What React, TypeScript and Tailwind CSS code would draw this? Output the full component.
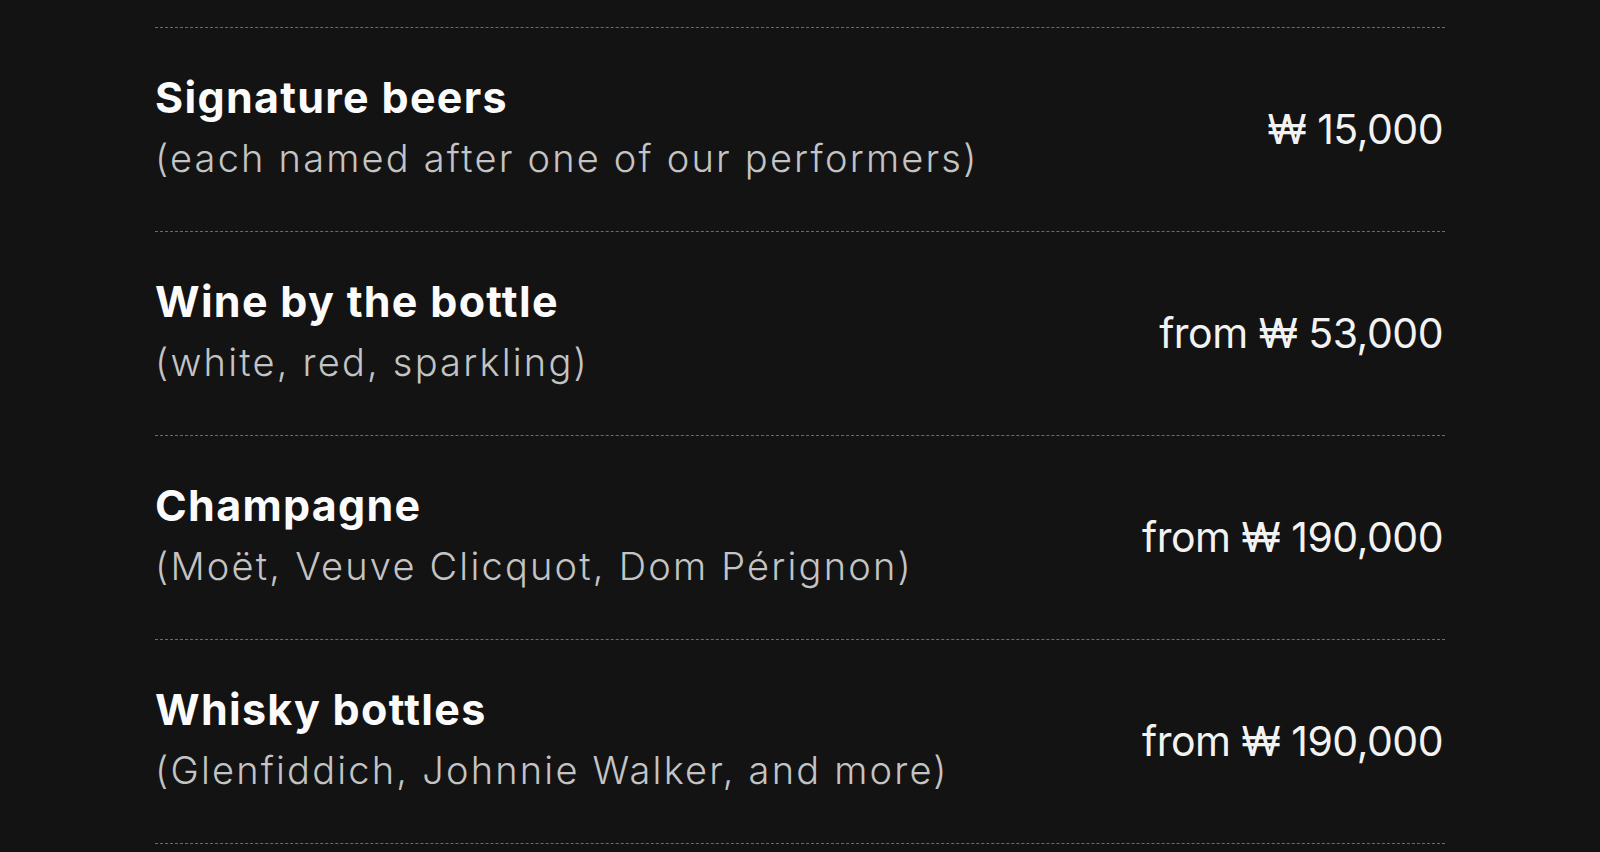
const items = [
  { name: 'Signature beers', note: '(each named after one of our performers)', price: '₩ 15,000' },
  { name: 'Wine by the bottle', note: '(white, red, sparkling)', price: 'from ₩ 53,000' },
  { name: 'Champagne', note: '(Moët, Veuve Clicquot, Dom Pérignon)', price: 'from ₩ 190,000' },
  { name: 'Whisky bottles', note: '(Glenfiddich, Johnnie Walker, and more)', price: 'from ₩ 190,000' },
]

export default function App() {
  return (
    <div className="min-h-[852px] bg-[#131313] font-['Inter',sans-serif]">
      <div className="mx-auto w-[1290px] pt-[27px]">
        <ul className="border-t border-dashed border-[#6b6b6b]">
          {items.map((it) => (
            <li
              key={it.name}
              className="flex h-[204px] items-center justify-between border-b border-dashed border-[#6b6b6b]"
            >
              <div className="mb-[4px] flex flex-col">
                <span className="pb-[4px] text-[43px] font-bold leading-[57px] tracking-[1.3px] text-[#fcfbfb]">
                  {it.name}
                </span>
                <span className="text-[38px] font-light leading-[57px] tracking-[2.2px] text-[#c4c4c4]">
                  {it.note}
                </span>
              </div>
              <span className="pr-[2px] text-[41px] font-normal tracking-[-0.5px] text-[#f2f2f2]">{it.price}</span>
            </li>
          ))}
        </ul>
      </div>
    </div>
  )
}
